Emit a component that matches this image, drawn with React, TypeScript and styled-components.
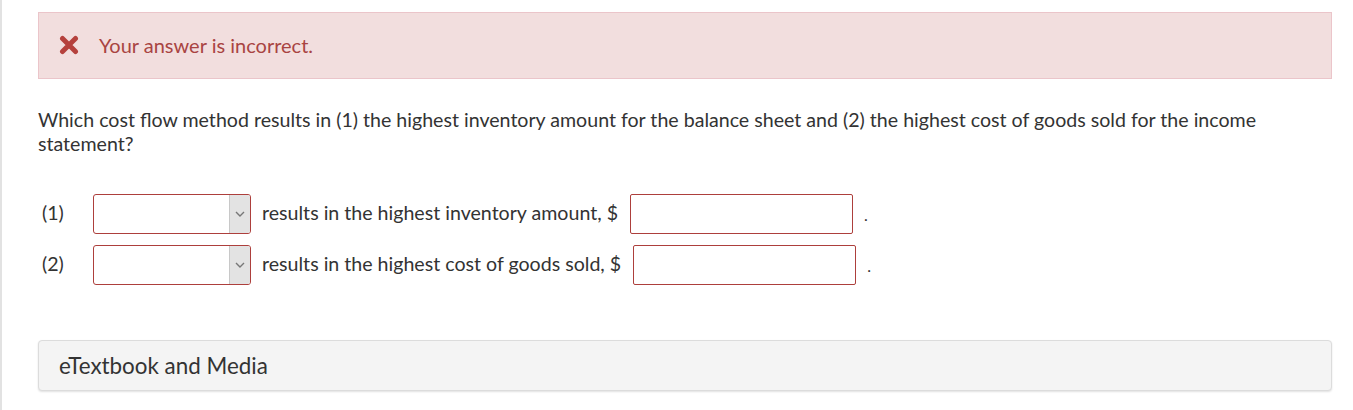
import React from 'react';
import styled, { createGlobalStyle } from 'styled-components';

const GlobalStyle = createGlobalStyle`
    html, body {
        margin: 0;
        padding: 0;
        background: #ffffff;
    }
    body {
        font-family: Lato, "Liberation Sans", Arial, sans-serif;
        color: #333333;
    }
`;

const Page = styled.div`
    height: 410px;
    box-sizing: border-box;
    border-left: 2px solid #e2e2e2;
    padding: 12px 21px 0 36px;
`;

const Alert = styled.div`
    display: flex;
    align-items: center;
    height: 67px;
    box-sizing: border-box;
    padding-left: 20px;
    padding-bottom: 2px;
    background-color: #f2dede;
    border: 1px solid #ebc5ca;
    color: #a94442;
    font-size: 20px;
`;

const AlertIcon = styled.svg`
    width: 20px;
    height: 20px;
    margin-right: 20px;
    flex-shrink: 0;
`;

const Question = styled.p`
    margin: 29px 0 38px 0;
    font-size: 19.6px;
    line-height: 24px;
    color: #333333;
`;

const Rows = styled.div`
    display: flex;
    flex-direction: column;
    gap: 11px;
`;

const Row = styled.div`
    display: flex;
    align-items: center;
    font-size: 19.6px;
    color: #333333;
`;

const Label = styled.span`
    width: 55px;
    padding-left: 4px;
    margin-bottom: 4px;
    box-sizing: border-box;
`;

const Select = styled.div<{ $invalid?: boolean }>`
    display: flex;
    width: 158px;
    height: 40px;
    box-sizing: border-box;
    border: 1px solid ${p => (p.$invalid ? '#ad3f3c' : '#999999')};
    border-radius: 3px;
    background: #ffffff;
    overflow: hidden;
    margin-right: 11px;
`;

const SelectValue = styled.div`
    flex: 1;
`;

const SelectArrow = styled.div`
    width: 20px;
    display: flex;
    align-items: center;
    justify-content: center;
    background: #e3e3e3;
    border-left: 1px solid #c8c8c8;
    color: #777777;
`;

const Phrase = styled.span`
    white-space: nowrap;
    margin-right: 12px;
    margin-bottom: 4px;
`;

const Amount = styled.div<{ $invalid?: boolean }>`
    width: 223px;
    height: 40px;
    box-sizing: border-box;
    border: 1px solid ${p => (p.$invalid ? '#ad3f3c' : '#999999')};
    border-radius: 2px;
    background: #ffffff;
`;

const Period = styled.span`
    margin-left: 11px;
    font-size: 16px;
`;

const Media = styled.div`
    margin-top: 55px;
    height: 51px;
    box-sizing: border-box;
    display: flex;
    align-items: center;
    padding-left: 20px;
    background: #f4f4f4;
    border: 1px solid #dcdcdc;
    border-radius: 4px;
    box-shadow: 0 1px 2px rgba(0, 0, 0, 0.12);
    font-size: 22.4px;
    color: #333333;
`;

const rows = [
    { label: '(1)', phrase: 'results in the highest inventory amount, $' },
    { label: '(2)', phrase: 'results in the highest cost of goods sold, $' },
];

function App() {
    return (
        <>
            <GlobalStyle />
            <Page>
                <Alert>
                    <AlertIcon viewBox="0 0 20 20">
                        <path d="M3.5 3.5 L16.5 16.5 M16.5 3.5 L3.5 16.5" stroke="#b5413d" strokeWidth="5" strokeLinecap="round" />
                    </AlertIcon>
                    Your answer is incorrect.
                </Alert>
                <Question>
                    Which cost flow method results in (1) the highest inventory amount for the balance sheet and (2) the highest cost of goods sold for the income statement?
                </Question>
                <Rows>
                    {rows.map(r => (
                        <Row key={r.label}>
                            <Label>{r.label}</Label>
                            <Select $invalid>
                                <SelectValue />
                                <SelectArrow>
                                    <svg width="10" height="6" viewBox="0 0 10 6">
                                        <path d="M1 1 L5 5 L9 1" fill="none" stroke="#777" strokeWidth="1.4" />
                                    </svg>
                                </SelectArrow>
                            </Select>
                            <Phrase>{r.phrase}</Phrase>
                            <Amount $invalid />
                            <Period>.</Period>
                        </Row>
                    ))}
                </Rows>
                <Media>eTextbook and Media</Media>
            </Page>
        </>
    );
}

export default App;
